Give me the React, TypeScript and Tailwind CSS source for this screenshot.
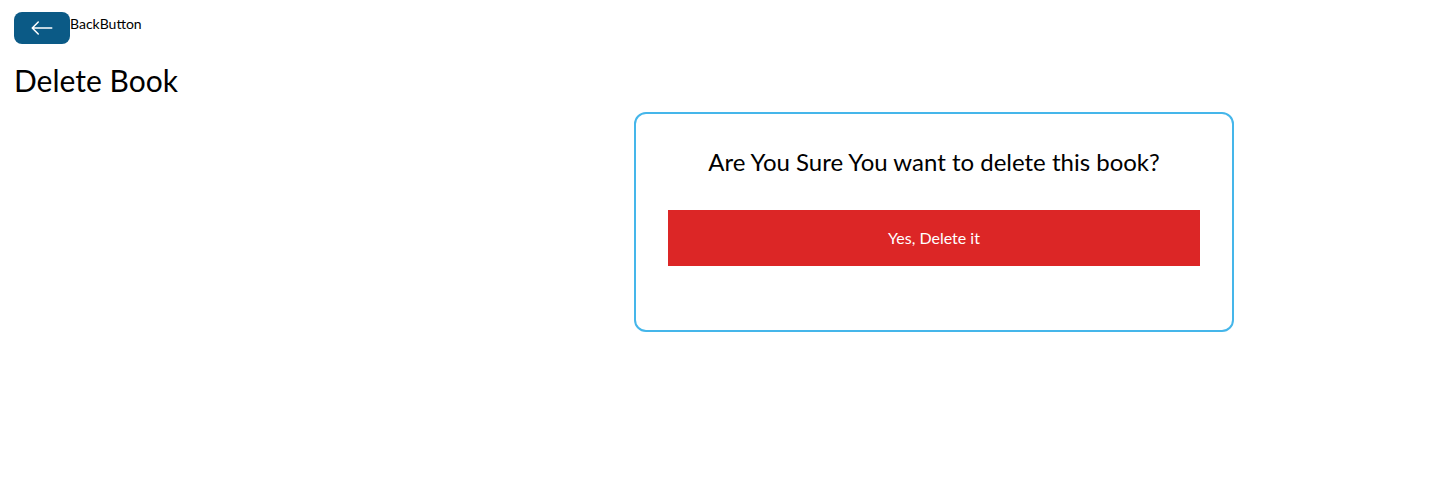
import React from "react";
import { BsArrowLeft } from "react-icons/bs";

const BackButton: React.FC = () => {
  return (
    <div className="flex items-start">
      <button className="bg-[#0b5a86] text-white px-4 py-1 rounded-lg w-14 h-8 flex items-center justify-center">
        <BsArrowLeft className="text-2xl" />
      </button>
      <span className="text-sm leading-6">BackButton</span>
    </div>
  );
};

const DeleteBook: React.FC = () => {
  return (
    <div
      className="p-[14px] pt-3 min-h-screen bg-white text-black"
      style={{ fontFamily: 'Lato, "Open Sans", sans-serif' }}
    >
      <BackButton />
      <h1 className="text-3xl mt-[18px] mb-[14px]">Delete Book</h1>
      <div className="flex flex-col items-center border-2 border-[#45b6ea] rounded-xl w-[600px] p-8 ml-[620px]">
        <h3 className="text-2xl">Are You Sure You want to delete this book?</h3>
        <button className="p-4 bg-[#dc2626] text-white m-8 w-full">
          Yes, Delete it
        </button>
      </div>
    </div>
  );
};

export default function App() {
  return <DeleteBook />;
}
